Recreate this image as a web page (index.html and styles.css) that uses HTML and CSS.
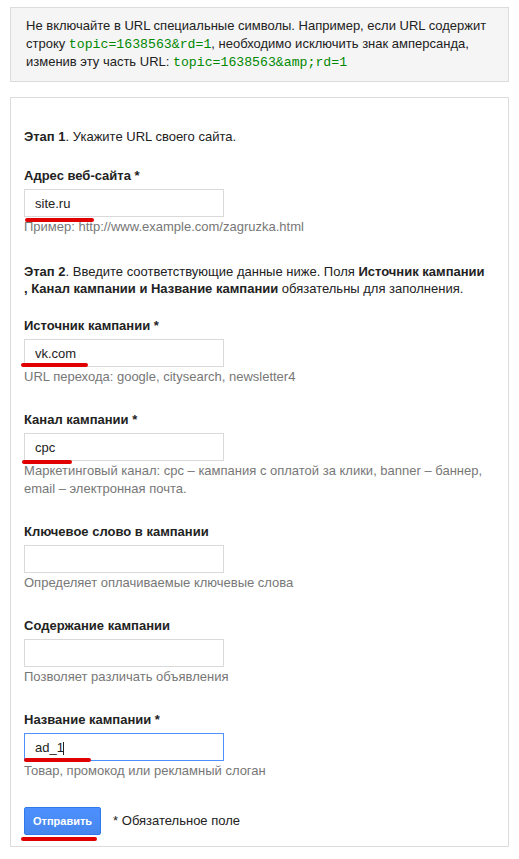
FILE: index.html
```html
<!DOCTYPE html>
<html>
  <head>
    <title>Компоновщик URL</title>
    <meta charset="UTF-8">
    <meta name="viewport" content="width=device-width, initial-scale=1.0">
    <link rel="stylesheet" href="styles.css">
  </head>
  <body>
    <div class="notice">
      Не включайте в URL специальные символы. Например, если URL содержит
      строку <code>topic=1638563&amp;rd=1</code>, необходимо исключить знак амперсанда,
      изменив эту часть URL: <code>topic=1638563&amp;amp;rd=1</code>
    </div>

    <div class="panel">
      <p class="step"><b>Этап 1</b>. Укажите URL своего сайта.</p>

      <div class="field">
        <label for="url">Адрес веб-сайта *</label>
        <div class="box">
          <input id="url" value="site.ru">
          <span class="mark mark-url"></span>
        </div>
        <div class="hint">Пример: http://www.example.com/zagruzka.html</div>
      </div>

      <p class="step step2"><b>Этап 2</b>. Введите соответствующие данные ниже. Поля <b>Источник кампании</b><br><b>, Канал кампании и Название кампании</b> обязательны для заполнения.</p>

      <div class="field first">
        <label for="source">Источник кампании *</label>
        <div class="box">
          <input id="source" value="vk.com">
          <span class="mark mark-source"></span>
        </div>
        <div class="hint">URL перехода: google, citysearch, newsletter4</div>
      </div>

      <div class="field">
        <label for="medium">Канал кампании *</label>
        <div class="box">
          <input id="medium" value="cpc">
          <span class="mark mark-medium"></span>
        </div>
        <div class="hint">Маркетинговый канал: cpc – кампания с оплатой за клики, banner – баннер, email – электронная почта.</div>
      </div>

      <div class="field">
        <label for="term">Ключевое слово в кампании</label>
        <div class="box">
          <input id="term">
        </div>
        <div class="hint">Определяет оплачиваемые ключевые слова</div>
      </div>

      <div class="field">
        <label for="content">Содержание кампании</label>
        <div class="box">
          <input id="content">
        </div>
        <div class="hint">Позволяет различать объявления</div>
      </div>

      <div class="field">
        <label for="name">Название кампании *</label>
        <div class="box">
          <input id="name" class="active" value="ad_1">
          <span class="caret"></span>
          <span class="mark mark-name"></span>
        </div>
        <div class="hint">Товар, промокод или рекламный слоган</div>
      </div>

      <div class="actions">
        <div class="box">
          <button>Отправить</button>
          <span class="mark mark-btn"></span>
        </div>
        <span>* Обязательное поле</span>
      </div>
    </div>
  </body>
</html>
```

FILE: styles.css
```css
* {
  box-sizing: border-box;
}
body {
  margin: 0;
  font-family: "Liberation Sans", Arial, sans-serif;
  font-size: 13px;
  line-height: 18px;
  color: #222;
  background: #fff;
}
code {
  font-family: "Liberation Mono", "Courier New", monospace;
  font-size: 13.2px;
  line-height: 1;
  color: #080;
}

/* top note */
.notice {
  margin: 7px 10px 0;
  padding: 9px 15px 10px;
  background: #f5f5f5;
  border: 1px solid #dcdcdc;
}

/* form panel */
.panel {
  margin: 15px 10px 0;
  padding: 30px 13px 11px;
  border: 1px solid #dcdcdc;
}
.step {
  margin: 0;
}
.step2 {
  margin-top: 27px;
  line-height: 17px;
}
.field {
  margin-top: 21px;
}
.field + .field {
  margin-top: 25px;
}
.field.first {
  margin-top: 20px;
}
.field label {
  display: block;
  font-weight: bold;
  margin-bottom: 4px;
}
.box {
  position: relative;
  width: 200px;
}
.box input {
  display: block;
  width: 200px;
  height: 28px;
  padding: 0 10px;
  border: 1px solid #d9d9d9;
  font-family: inherit;
  font-size: 13px;
  color: #222;
  outline: none;
}
.box input.active {
  border-color: #4d90fe;
}
.hint {
  margin-top: 1px;
  color: #777;
}

.actions {
  display: flex;
  align-items: center;
  gap: 12px;
  margin-top: 27px;
}
.actions .box {
  width: auto;
}
.actions button {
  display: block;
  height: 28px;
  padding: 0 8px;
  border: 1px solid #3079ed;
  border-radius: 2px;
  background: linear-gradient(#4d90fe, #4787ed);
  color: #fff;
  font-family: inherit;
  font-size: 11px;
  font-weight: bold;
}

/* text caret in the focused field */
.caret {
  position: absolute;
  left: 39px;
  top: 9px;
  width: 1px;
  height: 13px;
  background: #222;
}

/* red marker lines drawn over the screenshot */
.mark {
  position: absolute;
  height: 4px;
  border-radius: 2px;
  background: #e00000;
}
.mark-url {
  left: 1px;
  top: 29px;
  width: 69px;
}
.mark-source {
  left: -3px;
  top: 24px;
  width: 67px;
}
.mark-medium {
  left: -2px;
  top: 27px;
  width: 50px;
}
.mark-name {
  left: 0;
  top: 25px;
  width: 67px;
}
.mark-btn {
  left: -3px;
  top: 30px;
  width: 76px;
}
```
